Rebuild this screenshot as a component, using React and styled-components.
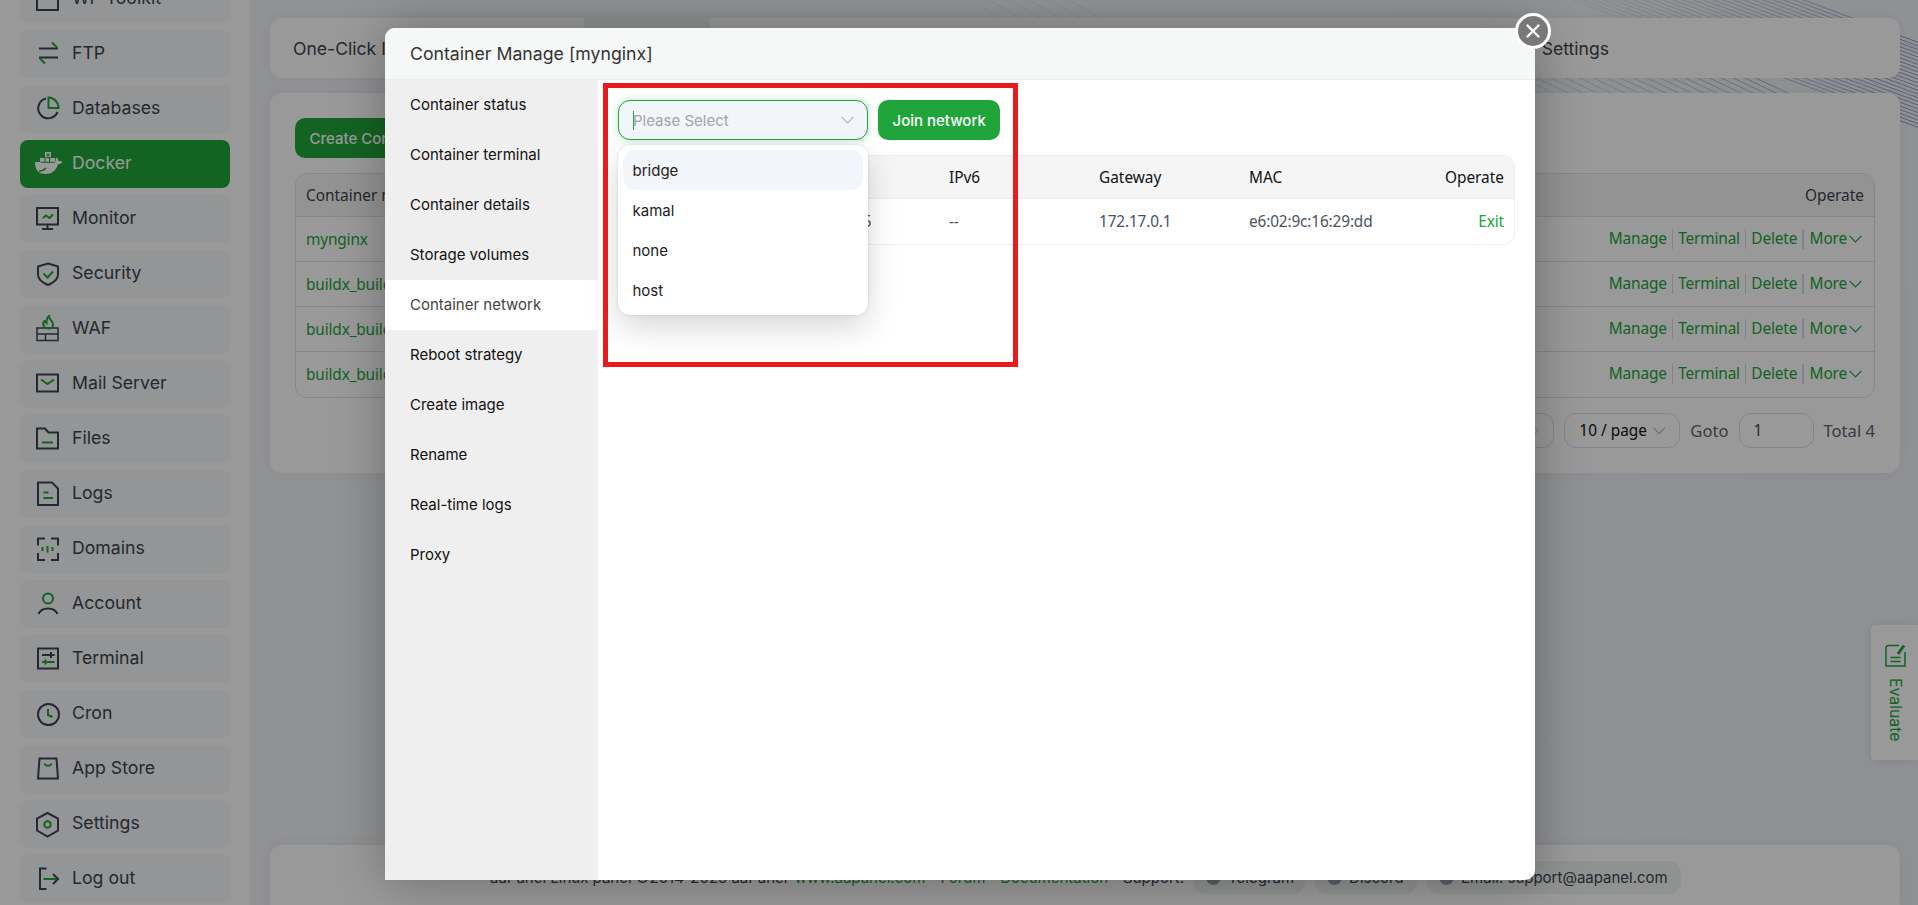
import styled, { createGlobalStyle, css } from 'styled-components';

const GlobalStyle = createGlobalStyle`
    *{
        box-sizing: border-box;
    }
    body{
        margin: 0;
        overflow: hidden;
        font-family: Inter, 'Liberation Sans', sans-serif;
        font-size: 15px;
        color: #3d4450;
    }
`

const PageStyled = styled.div`
    position: relative;
    display: flex;
    width: 1918px;
    height: 905px;
    overflow: hidden;
    background: #f0f2f5;
`

const SidebarStyled = styled.nav`
    display: flex;
    flex-direction: column;
    gap: 7px;
    flex: none;
    width: 250px;
    margin-top: -25px;
    padding: 0 20px;
    background: #fff;
`

const MenuItem = styled.a`
    display: flex;
    align-items: center;
    gap: 10px;
    flex: none;
    height: 48px;
    padding-left: 14px;
    border-radius: 8px;
    font-size: 17.7px;
    background: ${({ $active }) => $active ? '#20a53a' : '#f6f8fa'};
    color: ${({ $active }) => $active ? '#fff' : '#3d4450'};
    span{
        margin-top: -4px;
    }
    svg{
        flex: none;
        width: 28px;
        height: 28px;
        fill: none;
        stroke: #3d4450;
        stroke-width: 2;
    }
    .green{
        stroke: #20a53a;
    }
    .solid{
        fill: #fff;
        stroke: none;
    }
`

const MainStyled = styled.main`
    position: relative;
    display: flex;
    flex-direction: column;
    flex: 1;
    padding: 18px 18px 0 20px;
    background: linear-gradient(100deg, #f2f3f6 0%, #f1f3f6 60%, #eef1f6 100%);
`

const Waves = styled.svg`
    position: absolute;
    top: 0;
    right: 0;
    width: 938px;
    height: 130px;
    fill: none;
`

const Card = styled.section`
    position: relative;
    flex: none;
    background: #fff;
    border-radius: 12px;
    box-shadow: 0 0 12px rgba(60, 70, 110, 0.07);
`

const TopTabs = styled(Card)`
    display: flex;
    justify-content: space-between;
    height: 60px;
    padding: 0 291px 0 23px;
    line-height: 62px;
    font-size: 17.6px;
    span{
        width: 291px;
    }
    i{
        width: 126px;
        background: #edf5ef;
    }
    b{
        font-weight: 400;
        margin-left: auto;
    }
`

const ContainersCard = styled(Card)`
    height: 380px;
    margin-top: 15px;
    padding: 25px;
`

const Button = styled.button`
    height: 40px;
    padding: 0 14.5px;
    border: none;
    border-radius: 10px;
    background: #20a53a;
    color: #fff;
    font: 500 15px Inter, sans-serif;
    white-space: nowrap;
`

const tableFont = css`
    font-family: 'Noto Sans', 'Open Sans', sans-serif;
    font-size: 15.4px;
`

const TableBox = styled.div`
    ${tableFont}
    margin-top: 15px;
    border: 1px solid #e0e2ea;
    border-radius: 12px;
    overflow: hidden;
`

const TableRow = styled.div`
    display: flex;
    align-items: center;
    justify-content: space-between;
    height: ${({ $head }) => $head ? 42 : 45}px;
    padding: 0 10px;
    letter-spacing: ${({ $head }) => $head ? 0 : -0.15}px;
    color: ${({ $head }) => $head ? '#3d4450' : '#20a53a'};
    background: ${({ $head }) => $head ? '#f5f5f6' : '#fff'};
    & + &{
        border-top: 1px solid #e0e2ea;
    }
    &:last-child{
        height: 46px;
        padding-bottom: 1px;
    }
`

const Actions = styled.div`
    display: flex;
    align-items: center;
    span{
        height: 20px;
        padding: 0 5.2px;
        line-height: 20px;
        white-space: nowrap;
    }
    span + span{
        border-left: 1px solid #d8dae0;
    }
    span:last-child{
        display: flex;
        align-items: center;
        gap: 2px;
        padding-right: 2px;
        border-left-width: 2px;
    }
`

const Pager = styled.div`
    ${tableFont}
    display: flex;
    align-items: center;
    justify-content: flex-end;
    gap: 10px;
    margin-top: 15px;
    height: 35px;
    font-size: 16.6px;
    color: #5d636e;
`

const PagerBox = styled.div`
    display: flex;
    align-items: center;
    gap: 6px;
    flex: none;
    width: ${({ $width }) => $width}px;
    height: 35px;
    padding: 0 14px;
    border: 1px solid #dcdee4;
    border-radius: 12px;
    font-size: 15.4px;
    white-space: nowrap;
    color: ${({ $dark }) => $dark ? '#111' : '#3d4450'};
`

const Footer = styled(Card)`
    display: flex;
    align-items: center;
    gap: 10px;
    height: 70px;
    margin-top: auto;
    margin-bottom: -10px;
    padding: 0 0 5px 220px;
    white-space: nowrap;
    color: #3d4450;
    span:first-child{
        margin-right: -3px;
    }
    a{
        color: #20a53a;
        margin-right: 5px;
        text-decoration: none;
    }
`

const Badge = styled.span`
    display: flex;
    align-items: center;
    gap: 7px;
    flex: none;
    width: ${({ $width }) => $width}px;
    height: 33px;
    padding-left: 12px;
    border-radius: 12px;
    background: #f0f3f3;
    i{
        width: 15px;
        height: 15px;
        border-radius: 50%;
        background: #98a0ac;
    }
`

const EvaluateTab = styled.aside`
    position: absolute;
    right: 0;
    top: 625px;
    display: flex;
    flex-direction: column;
    align-items: center;
    gap: 11px;
    width: 47px;
    height: 135px;
    padding: 19px 0 0 1px;
    border-radius: 4px 0 0 4px;
    background: #fff;
    color: #20a53a;
    box-shadow: 0 0 12px rgba(0, 0, 0, 0.1);
    span{
        writing-mode: vertical-rl;
        font-size: 15.8px;
        line-height: 18px;
    }
`

const Mask = styled.div`
    position: absolute;
    inset: 0;
    background: rgba(0, 0, 0, 0.4);
`

const ModalStyled = styled.div`
    position: absolute;
    left: 385px;
    top: 28px;
    width: 1150px;
    height: 852px;
    display: flex;
    flex-direction: column;
    border-radius: 10px;
    background: #fff;
    box-shadow: 1px 1px 50px rgba(0, 0, 0, 0.3);
    color: #111;
`

const ModalHeader = styled.header`
    flex: none;
    height: 52px;
    padding-left: 25px;
    border-bottom: 1px solid #eceeee;
    border-radius: 10px 10px 0 0;
    background: #f6f8f8;
    color: #333;
    font-size: 17.7px;
    line-height: 52px;
`

const CloseButton = styled.button`
    position: absolute;
    top: -15px;
    right: -16px;
    display: flex;
    width: 36px;
    height: 36px;
    padding: 0;
    border: 3px solid #fff;
    border-radius: 50%;
    background: #787878;
`

const ModalBody = styled.div`
    display: flex;
    flex: 1;
`

const ModalNav = styled.ul`
    width: 213px;
    margin: 0;
    padding: 0;
    list-style: none;
    background: #efefef;
`

const ModalNavItem = styled.li`
    height: 50px;
    padding-left: 25px;
    line-height: 50px;
    background: ${({ $active }) => $active ? '#fff' : 'transparent'};
    color: ${({ $active }) => $active ? '#444' : '#111'};
`

const NetworkPane = styled.div`
    position: relative;
    flex: 1;
    padding: 20px 20px 0;
`

const Toolbar = styled.div`
    display: flex;
    gap: 10px;
`

const Select = styled.div`
    position: relative;
    display: flex;
    align-items: center;
    width: 250px;
    height: 40px;
    padding: 0 13px 0 14px;
    border: 1px solid #20a53a;
    border-radius: 12px;
    background: #f2f5fa;
    box-shadow: 0 0 8px rgba(32, 165, 58, 0.3);
    color: #a2a4a8;
    svg{
        margin-left: auto;
    }
`

const Caret = styled.i`
    width: 1px;
    height: 19px;
    margin-right: -1px;
    background: #20a53a;
`

const Dropdown = styled.ul`
    position: absolute;
    z-index: 1;
    top: 44px;
    left: -1px;
    width: 250px;
    margin: 0;
    padding: 5px;
    border-radius: 12px;
    background: #fff;
    list-style: none;
    color: #222;
    box-shadow: 0 0 3px rgba(0, 0, 0, 0.12), 0 12px 32px rgba(0, 0, 0, 0.16);
`

const Option = styled.li`
    height: 40px;
    padding-left: 9.5px;
    border-radius: 12px;
    line-height: 41px;
    background: ${({ $active }) => $active ? '#f2f5fa' : '#fff'};
`

const NetworkTable = styled.div`
    ${tableFont}
    margin-top: 15px;
    border: 1px solid #ebebf2;
    border-radius: 12px;
    overflow: hidden;
`

const NetworkRow = styled.div`
    display: grid;
    grid-template-columns: 170px repeat(4, 150px) 1fr;
    align-items: center;
    height: ${({ $head }) => $head ? 42 : 46}px;
    padding-bottom: ${({ $head }) => $head ? 0 : 1}px;
    letter-spacing: ${({ $head }) => $head ? 0 : -0.15}px;
    background: ${({ $head }) => $head ? '#f5f5f6' : '#fff'};
    border-top: ${({ $head }) => $head ? 'none' : '1px solid #ebebf2'};
    color: ${({ $head }) => $head ? '#111' : '#4b5260'};
    span{
        padding: 0 10px;
    }
    span:last-child{
        text-align: right;
        color: ${({ $head }) => $head ? '#111' : '#20a53a'};
    }
`

const Highlight = styled.div`
    position: absolute;
    z-index: 2;
    left: 603px;
    top: 83px;
    width: 415px;
    height: 284px;
    border: 5px solid #e81c1c;
`

const menu = [
    { label: 'WP Toolkit', icon: <path d='M4 4h21v22H4z' /> },
    { label: 'FTP', icon: <><path d='M6 9.500h19M6 18.500h19' /><path className='green' d='M19 3.500l5.500 5.500M6.500 19l5.500 5.500' /></> },
    { label: 'Databases', icon: <><path d='M13 4.500A10 10 0 1 0 24.500 18' /><path className='green' d='M15.500 3.500a10.500 10.500 0 0 1 10 10.500h-10z' /></> },
    { label: 'Docker', active: true, icon: <><path className='solid' d='M7 9h5V7h0V3h6v6h4v4.500c1-1.500 0-3.500 1.500-5 1.500 1 2 2.500 2 3.500 1.500-.3 3 0 4 .8-1 2-2.500 2.500-4.500 2.500C23 22 18.500 25 12.500 25 5.500 25 2 21 2 13h5z' /><path d='M6 22c3 0 5-.8 7-3' style={{ stroke: '#20a53a', strokeWidth: 1.5 }} /><path d='M7.500 13.300h14M12 9v4.500M16.500 9v4.500M12 8.700h6M14 5h2v2h-2z' style={{ stroke: '#20a53a', strokeWidth: 1 }} /></> },
    { label: 'Monitor', icon: <><path d='M4 4h21v16.500H4zM14.500 20.500v4M9 25h11' /><path className='green' d='M10 14l3-2.500 3.500 2.500 3.500-3.500' /></> },
    { label: 'Security', icon: <><path d='M15 4.500l10 3v8c0 5-4 8-10 10.500C9 23.500 5 20.500 5 15.500v-8z' /><path className='green' d='M10.500 14.500l4 4 5.500-6' /></> },
    { label: 'WAF', icon: <><path d='M4 14h21v12.500H4zM4 20h21M12.500 20v6.500' strokeWidth='1.500' /><path className='green' d='M11.500 13c-3-4 0-6 0-6l2 2c0-4 1-6 2.500-7-.5 3 4.500 5 4 9 0 2-2 3.500-4.500 3.500-2 0-3-.5-4-1.500z' /></> },
    { label: 'Mail Server', icon: <><path d='M4 5.500h21v17H4z' /><path className='green' d='M8 10.500l6.500 4.500 6.500-4.500' /></> },
    { label: 'Files', icon: <><path d='M4 4.500h8l3.500 4H25V24.500H4z' /><path className='green' d='M9 18.500h11' /></> },
    { label: 'Logs', icon: <><path d='M5 3.500h14l6 6V26H5z' /><path className='green' d='M10.500 13.500h5M10.500 19h9.500' /></> },
    { label: 'Domains', icon: <><path d='M12 4.500H5v7M18 4.500h7v7M12 26H5v-7M18 26h7v-7' /><path className='green' d='M9.500 13v4M14.500 12v6.500M19.500 13v4' /></> },
    { label: 'Account', icon: <><circle className='green' cx='15' cy='9.500' r='5' /><path d='M5.500 25c3-7.500 16-7.500 19 0' /></> },
    { label: 'Terminal', icon: <><path d='M5 4.500h20v20H5zM9 11h12.500M18 8v6' /><path className='green' d='M9 18h12.500M12.500 15.500v5' /></> },
    { label: 'Cron', icon: <><circle cx='15.500' cy='15.500' r='10.500' /><path className='green' d='M15 10v6l4.500 2' /></> },
    { label: 'App Store', icon: <><path d='M6.500 4.500h17l1.500 20H5z' /><path className='green' d='M11.500 9.500c1 3 6 3 7 0' /></> },
    { label: 'Settings', icon: <><path d='M14.500 4l10.500 5.500v12l-10.500 6L4 21.500v-12z' /><circle className='green' cx='14.500' cy='15.500' r='3.200' /></> },
    { label: 'Log out', icon: <><path d='M13.500 4.500H7v20.500h6.500M20 10l5 5-5 5' /><path className='green' d='M10.500 15h13' /></> },
];

const modalNav = ['Container status', 'Container terminal', 'Container details', 'Storage volumes', 'Container network',
    'Reboot strategy', 'Create image', 'Rename', 'Real-time logs', 'Proxy'];

const containers = ['mynginx', 'buildx_buildkit_0', 'buildx_buildkit_1', 'buildx_buildkit_2'];

const networks = ['bridge', 'kamal', 'none', 'host'];

function ChevronDown({ color }){
    return(
        <svg width='13' height='8' viewBox='0 0 13 8' fill='none' stroke={color} strokeWidth='1.2'>
            <path d='M.6 .8l5.900 6 5.900-6' />
        </svg>
    )
}

function Sidebar(){
    return(
        <SidebarStyled>
            {menu.map(({ label, icon, active }) =>
                <MenuItem key={label} $active={active}>
                    <svg viewBox='1 1 28 28'>{icon}</svg>
                    <span>{label}</span>
                </MenuItem>
            )}
        </SidebarStyled>
    )
}

function BackgroundWaves(){
    const lines = Array.from({ length: 24 }, (_, i) => i);
    return(
        <Waves viewBox='0 0 938 130'>
            <defs>
                <linearGradient id='wave' gradientUnits='userSpaceOnUse' x1='600' y1='0' x2='938' y2='60'>
                    <stop offset='0' stopColor='#b4b8cc' stopOpacity='0.2' />
                    <stop offset='1' stopColor='#9a9ac4' />
                </linearGradient>
            </defs>
            {/* dense band on the right */}
            {lines.map(i =>
                <path key={`r${i}`} stroke='url(#wave)' d={`M520 ${-112 + i * 3.7} L940 ${43 + i * 3.7}`} />
            )}
            {/* sparser lines between the cards */}
            {lines.slice(0, 20).map(i =>
                <path
                    key={`m${i}`}
                    stroke='#a8acc8'
                    strokeOpacity={0.3 + i * 0.03}
                    d={`M${510 + i * 15 - i * i * 0.1} 70 L${565 + i * 15 - i * i * 0.1} 96`}
                />
            )}
            {lines.slice(0, 9).map(i =>
                <path key={`l${i}`} stroke='#d4d7dd' strokeOpacity='0.5' d={`M${-80 + i * 20} -6 L${-30 + i * 20} 24`} />
            )}
        </Waves>
    )
}

function ContainerTable(){
    return(
        <TableBox>
            <TableRow $head>
                <span>Container name</span>
                <span>Operate</span>
            </TableRow>
            {containers.map(name =>
                <TableRow key={name}>
                    <span>{name}</span>
                    <Actions>
                        <span>Manage</span>
                        <span>Terminal</span>
                        <span>Delete</span>
                        <span>More<ChevronDown color='#20a53a' /></span>
                    </Actions>
                </TableRow>
            )}
        </TableBox>
    )
}

function NetworkModal(){
    return(
        <ModalStyled>
            <ModalHeader>Container Manage [mynginx]</ModalHeader>
            <CloseButton>
                <svg width='30' height='30' viewBox='0 0 30 30' stroke='#fff' strokeWidth='2.400' strokeLinecap='round'>
                    <path d='M9.500 9.500l11 11M20.500 9.500l-11 11' />
                </svg>
            </CloseButton>
            <ModalBody>
                <ModalNav>
                    {modalNav.map(item =>
                        <ModalNavItem key={item} $active={item === 'Container network'}>{item}</ModalNavItem>
                    )}
                </ModalNav>
                <NetworkPane>
                    <Toolbar>
                        <Select>
                            <Caret />
                            Please Select
                            <ChevronDown color='#b4b8bf' />
                            <Dropdown>
                                {networks.map((name, i) =>
                                    <Option key={name} $active={i === 0}>{name}</Option>
                                )}
                            </Dropdown>
                        </Select>
                        <Button>Join network</Button>
                    </Toolbar>
                    <NetworkTable>
                        <NetworkRow $head>
                            <span>Name</span>
                            <span>IPv4</span>
                            <span>IPv6</span>
                            <span>Gateway</span>
                            <span>MAC</span>
                            <span>Operate</span>
                        </NetworkRow>
                        <NetworkRow>
                            <span>bridge</span>
                            <span>172.17.0.5</span>
                            <span>--</span>
                            <span>172.17.0.1</span>
                            <span>e6:02:9c:16:29:dd</span>
                            <span>Exit</span>
                        </NetworkRow>
                    </NetworkTable>
                </NetworkPane>
            </ModalBody>
        </ModalStyled>
    )
}

export default function App(){
    return(
        <PageStyled>
            <GlobalStyle />
            <Sidebar />
            <MainStyled>
                <BackgroundWaves />
                <TopTabs>
                    <span>One-Click Install</span>
                    <i />
                    <b>Settings</b>
                </TopTabs>
                <ContainersCard>
                    <Button>Create Container</Button>
                    <ContainerTable />
                    <Pager>
                        <PagerBox $width={35}>
                            <svg width='8' height='13' viewBox='0 0 8 13' fill='none' stroke='#8d929b'><path d='M1 1l5.500 5.500L1 12' /></svg>
                        </PagerBox>
                        <PagerBox $width={116} $dark>10 / page <ChevronDown color='#b0b4bb' /></PagerBox>
                        Goto
                        <PagerBox $width={75}>1</PagerBox>
                        <span>Total 4</span>
                    </Pager>
                </ContainersCard>
                <Footer>
                    <span>aaPanel Linux panel ©2014-2025 aaPanel</span>
                    <a>www.aapanel.com</a>
                    <a>Forum</a>
                    <a>Documentation</a>
                    <span>Support:</span>
                    <Badge $width={111}><i />Telegram</Badge>
                    <Badge $width={102}><i />Discord</Badge>
                    <Badge $width={254}><i />Email: support@aapanel.com</Badge>
                </Footer>
            </MainStyled>
            <EvaluateTab>
                <svg width='21' height='23' viewBox='0 0 21 23' fill='none' stroke='#20a53a' strokeWidth='1.500'>
                    <path d='M14 1.500H3.500a2.500 2.500 0 0 0-2.500 2.500V22h19V8M5.500 13.500h10M5.500 17.500h10' />
                    <path d='M13 10l6-8.500' strokeWidth='3' />
                </svg>
                <span>Evaluate</span>
            </EvaluateTab>
            <Mask />
            <NetworkModal />
            <Highlight />
        </PageStyled>
    )
}
